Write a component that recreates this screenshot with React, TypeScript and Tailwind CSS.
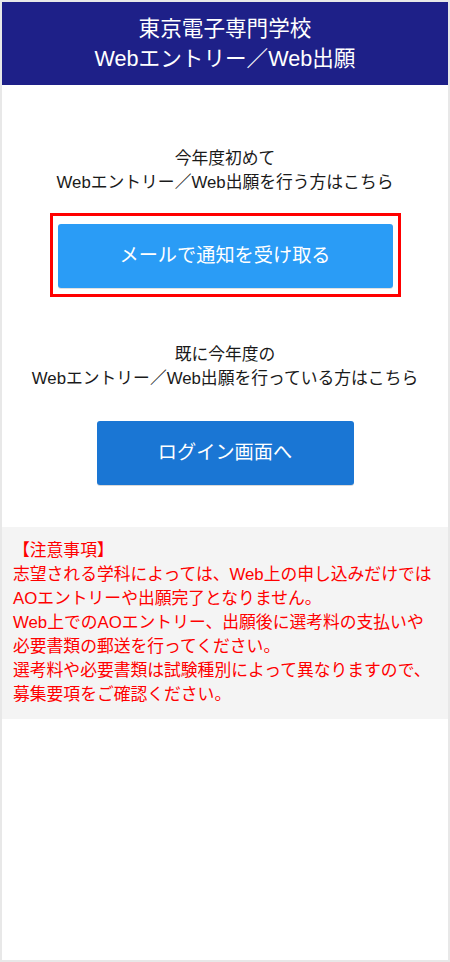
const FONT = 'font-["Liberation_Sans","Noto_Sans_CJK_JP",sans-serif]';

const NOTICE_LINES = [
  '【注意事項】',
  '志望される学科によっては、Web上の申し込みだけでは',
  'AOエントリーや出願完了となりません。',
  'Web上でのAOエントリー、出願後に選考料の支払いや',
  '必要書類の郵送を行ってください。',
  '選考料や必要書類は試験種別によって異なりますので、',
  '募集要項をご確認ください。',
];

export default function App() {
  return (
    <div className={`${FONT} h-[962px] w-[450px] border-2 border-[#e8e8e8] bg-white flex flex-col`}>
      {/* Header */}
      <header className="h-[83px] shrink-0 bg-[#1e2088] flex flex-col items-center justify-center text-white text-[21.6px] leading-[30px]">
        <p>東京電子専門学校</p>
        <p>Webエントリー／Web出願</p>
      </header>

      {/* First-time entry */}
      <section className="mt-[62px] flex flex-col items-center">
        <p className="text-center text-[16.8px] leading-[24px] text-[#1a1a1a]">
          今年度初めて
          <br />
          Webエントリー／Web出願を行う方はこちら
        </p>
        <div className="mt-[18px] w-[351px] border-[3px] border-[#ff0000] px-[5px] pt-[8px] pb-[6px]">
          <button className="h-[64px] w-full rounded-[3px] bg-[#2a9cf6] text-white text-[19.2px] shadow-[0_1px_0_rgba(0,0,0,0.12)]">
            メールで通知を受け取る
          </button>
        </div>
      </section>

      {/* Already registered */}
      <section className="mt-[46px] flex flex-col items-center">
        <p className="text-center text-[16.8px] leading-[24px] text-[#1a1a1a]">
          既に今年度の
          <br />
          Webエントリー／Web出願を行っている方はこちら
        </p>
        <button className="mt-[30px] h-[64px] w-[257px] rounded-[3px] bg-[#1a76d4] text-white text-[19.2px] shadow-[0_1px_0_rgba(0,0,0,0.15)]">
          ログイン画面へ
        </button>
      </section>

      {/* Notice */}
      <section className="mt-[42px] bg-[#f4f4f4] px-[11px] py-[12px] text-[16.8px] leading-[24px] text-[#ff0000] whitespace-nowrap">
        {NOTICE_LINES.map((line) => (
          <p key={line}>{line}</p>
        ))}
      </section>
    </div>
  );
}
